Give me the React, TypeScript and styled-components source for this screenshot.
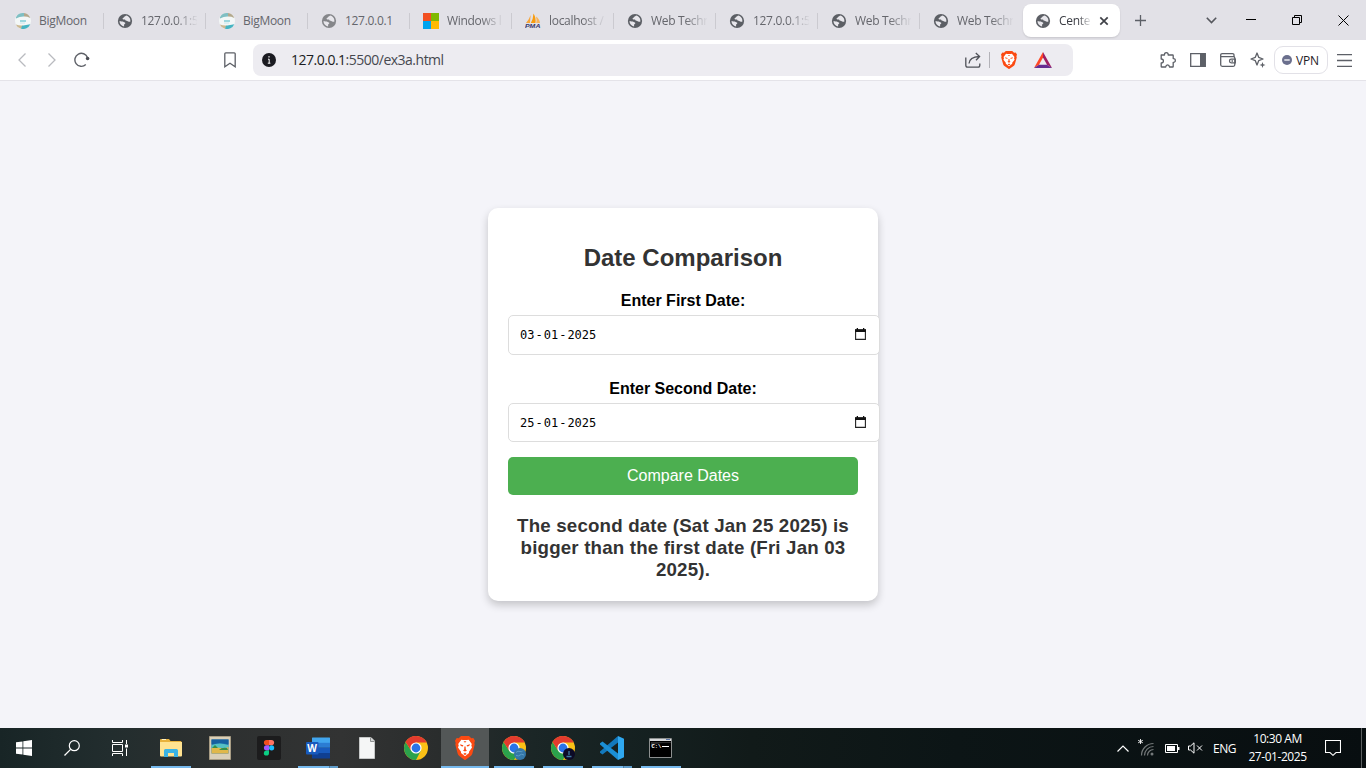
import React from "react";
import styled, { createGlobalStyle, css } from "styled-components";

const GlobalStyle = createGlobalStyle`
  *, *::before, *::after { box-sizing: border-box; }
  html, body { margin: 0; padding: 0; }
  body { font-family: "Open Sans", "Noto Sans", sans-serif; overflow: hidden; }
  svg { display: block; flex: none; }
`;

const Screen = styled.div`
  display: flex;
  flex-direction: column;
  width: 1366px;
  height: 768px;
  background: #f4f4f9;
`;

/* ---------- Tab strip ---------- */

const TabStrip = styled.header`
  display: flex;
  height: 40px;
  padding-left: 2px;
  background: #e2e1e7;
`;

const Tab = styled.div`
  display: flex;
  align-items: center;
  gap: 8px;
  width: 102px;
  height: 40px;
  padding: 2px 9px 0 13px;
  background: linear-gradient(#cbcad0, #cbcad0) right 13px / 1px 16px no-repeat;
  &:nth-child(10) { background: none; }
`;

const ActiveTab = styled.div`
  display: flex;
  align-items: center;
  width: 97px;
  height: 33px;
  margin: 4px 0 0 1px;
  padding: 1px 11px 0 12px;
  border-radius: 8px;
  background: #fff;
  box-shadow: 0 1px 2px rgba(0, 0, 0, 0.12);
  gap: 8px;
`;

const TabTitle = styled.span<{ $active?: boolean; $fade?: boolean }>`
  flex: 1;
  min-width: 0;
  overflow: hidden;
  white-space: nowrap;
  font-size: 12px;
  line-height: 18px;
  letter-spacing: -0.3px;
  color: ${(p) => (p.$active ? "#3b3d44" : "#65666c")};
  ${(p) =>
    p.$fade &&
    css`
      mask-image: linear-gradient(to right, #000 60%, transparent 102%);
    `}
`;

const WindowControls = styled.div`
  display: flex;
  margin-left: auto;
`;

const ControlSlot = styled.div<{ $w: number }>`
  display: flex;
  align-items: center;
  justify-content: center;
  width: ${(p) => p.$w}px;
  height: 40px;
`;

/* ---------- Toolbar ---------- */

const Toolbar = styled.nav`
  display: flex;
  align-items: center;
  height: 41px;
  padding: 0 0 0 7px;
  background: #fff;
  border-bottom: 1px solid #e4e3e9;
`;

const ToolSlot = styled.div<{ $ml?: number }>`
  display: flex;
  flex: none;
  align-items: center;
  justify-content: center;
  width: 30px;
  height: 30px;
  margin-left: ${(p) => p.$ml ?? 0}px;
`;

const AddressBar = styled.div`
  display: flex;
  flex: none;
  align-items: center;
  width: 820px;
  height: 32px;
  margin-left: 8px;
  padding: 0 21px 0 9px;
  border-radius: 8px;
  background: #edecf1;
`;

const Url = styled.span`
  flex: 1;
  margin-left: 15px;
  font-size: 14px;
  line-height: 20px;
  letter-spacing: -0.5px;
  color: #46484f;
  b { font-weight: 400; color: #1b1c22; }
`;

const Divider = styled.i`
  width: 1px;
  height: 16px;
  margin: 0 11px 0 8px;
  background: #b3b2b8;
`;

const VpnButton = styled.div`
  display: flex;
  flex: none;
  align-items: center;
  gap: 4px;
  width: 54px;
  height: 28px;
  margin-left: 1px;
  padding-left: 7px;
  border: 1px solid #e2e1e7;
  border-radius: 9px;
  font-size: 12px;
  letter-spacing: -0.2px;
  color: #1f2026;
`;

/* ---------- Page ---------- */

const Page = styled.main`
  display: flex;
  flex: 1;
  align-items: center;
  justify-content: center;
  background: #f4f4f9;
  font-family: Arial, "Liberation Sans", sans-serif;
`;

const Card = styled.section`
  width: 390px;
  height: 393px;
  padding: 36px 20px 20px;
  border-radius: 10px;
  background: #fff;
  box-shadow: 0 4px 8px rgba(0, 0, 0, 0.2);
  text-align: center;
`;

const Title = styled.h2`
  margin: 0 0 21px;
  font-size: 24px;
  line-height: 27px;
  color: #333;
`;

const Label = styled.label`
  display: block;
  height: 18px;
  font-size: 16px;
  line-height: 18px;
  font-weight: 700;
  color: #000;
`;

const DateBox = styled.div<{ $h: number; $mb: number }>`
  display: flex;
  align-items: center;
  justify-content: space-between;
  width: 372px;
  height: ${(p) => p.$h}px;
  margin: 5px 0 ${(p) => p.$mb}px;
  padding: 0 12px 0 11px;
  border: 1px solid #ddd;
  border-radius: 5px;
  background: #fff;
`;

const DateText = styled.div`
  display: flex;
  font: 12px/16px "DejaVu Sans Mono", monospace;
  color: #000;
  span { padding: 0 1px 0 0; }
  i + span { padding: 0 1px; }
  i { font-style: normal; }
`;

const CompareButton = styled.button`
  display: block;
  width: 350px;
  height: 38px;
  margin: 0 0 20px;
  padding: 10px;
  border: 0;
  border-radius: 5px;
  background: #4caf50;
  color: #fff;
  font: 16px/18px Arial, "Liberation Sans", sans-serif;
`;

const Result = styled.h3`
  margin: 0 -2px;
  font-size: 18.72px;
  line-height: 22px;
  letter-spacing: 0.18px;
  color: #333;
`;

/* ---------- Taskbar ---------- */

const Taskbar = styled.footer`
  display: flex;
  height: 40px;
  background: linear-gradient(90deg, #182526 0%, #222d2e 8%, #2d3030 16%, #323333 25%, #2a2d2d 32%, #1b2626 39%, #152121 46%, #111a19 55%, #0c1516 70%, #080e10 100%);
  color: #fff;
`;

const TaskSlot = styled.div<{ $open?: boolean; $active?: boolean; $stack?: boolean; $first?: boolean }>`
  display: flex;
  align-items: center;
  justify-content: center;
  width: 48px;
  height: 40px;
  margin-left: ${(p) => (p.$first ? 3 : 0)}px;
  margin-right: ${(p) => (p.$open === undefined ? 0 : 1)}px;
  ${(p) =>
    p.$open &&
    css`
      background: linear-gradient(90deg, #76b9ed ${p.$stack ? "31px, #4f7ea2 31px, #4f7ea2 32px, #5f9cca 32px" : "100%"}) 4px 38px / 40px 2px no-repeat;
    `}
  ${(p) =>
    p.$active &&
    css`
      background: linear-gradient(#76b9ed, #76b9ed) 0 38px / 48px 2px no-repeat, #535757;
    `}
`;

const Tray = styled.div`
  display: flex;
  align-items: center;
  margin-left: auto;
  font-size: 12px;
`;

const TrayIcons = styled.div`
  display: flex;
  align-items: center;
  gap: 8px;
`;

const Language = styled.span`
  width: 24px;
  margin-left: 10px;
  letter-spacing: -0.45px;
`;

const Clock = styled.div`
  display: flex;
  flex-direction: column;
  width: 70px;
  margin-left: 6px;
  padding-right: 1px;
  text-align: center;
  line-height: 18px;
  letter-spacing: -0.45px;
  white-space: nowrap;
`;

const NotificationIcon = styled.svg`
  margin-left: 12px;
`;

const Peek = styled.i`
  width: 1px;
  height: 40px;
  margin: 0 4px 0 20px;
  background: #5b5f60;
`;

/* ---------- Icons ---------- */

const Globe = ({ color = "#5c5f65" }: { color?: string }) => (
  <svg width="16" height="16" viewBox="0 0 16 16">
    <circle cx="8" cy="8" r="7.1" fill={color} />
    <path d="M9 2.6 C8.6 3.5 7.6 3.3 7.2 4.1 C6.8 4.8 5.8 4.7 5.6 5.5 C5.5 6.3 6.3 6.6 7.1 6.5 C8.4 6.4 8.5 7.1 8.8 7.7 C9.2 8.3 10.8 7.7 11.3 8.4 C11.7 9 12.4 8.8 13.3 8.7 C13.8 6 12 3 9 2.6Z" fill="#e8e7ec" />
    <path d="M2.5 8 C3.7 8.5 5.8 8.2 6.7 9 C7.4 9.6 8.5 9.3 8.3 10.3 C8.1 11.1 7.2 11 7.1 11.9 C7 12.8 7.3 13.1 7 13.4 C4.4 13 2.4 10.8 2.5 8Z" fill="#e8e7ec" />
  </svg>
);

const BigMoonIcon = () => (
  <svg width="16" height="16" viewBox="0 0 16 16">
    <circle cx="8" cy="8" r="8" fill="#f3f7f7" />
    <path d="M1 4.2A8 8 0 0 1 9 .1L9 3.6Q5 3.400 1 5.500Z" fill="#7fbfc3" />
    <path d="M9 .1A8 8 0 0 1 15.300 5Q12 3.400 9 3.600Z" fill="#b3a88c" />
    <path d="M.8 11.400A8 8 0 0 0 6 15.800L8 12.400Q5 13 .8 11.400Z" fill="#cbb891" />
    <path d="M6 15.800A8 8 0 0 0 15.300 11.200Q11 12 7 12.800Z" fill="#45b4c2" />
    <path d="M5 8h6" stroke="#6fc6d1" strokeWidth="1.300" />
    <path d="M5 10h5" stroke="#c9e8ec" />
  </svg>
);

const WindowsFavicon = () => (
  <svg width="16" height="16" viewBox="0 0 16 16" shapeRendering="crispEdges">
    <path fill="#f25022" d="M0 0h8v8H0z" />
    <path fill="#7fba00" d="M8 0h8v8H8z" />
    <path fill="#00a4ef" d="M0 8h8v8H0z" />
    <path fill="#ffb900" d="M8 8h8v8H8z" />
  </svg>
);

const PmaIcon = () => (
  <svg width="16" height="16" viewBox="0 0 16 16">
    <path d="M5.600 2L5 10H1Q4.300 6.500 5.600 2Z" fill="#f6a53a" />
    <path d="M8.500 .5Q11.300 5 10.400 10H5.800Q8.200 6 8.500 .5Z" fill="#f89c0e" />
    <path d="M11 3.500Q14.600 6 15 10H11.300Q12 7 11 3.500Z" fill="#f8b35a" />
    <text x="0" y="15.400" fontSize="6.200" fontWeight="800" fontStyle="italic" fontFamily="Liberation Sans, sans-serif" textLength="15.400" lengthAdjust="spacingAndGlyphs" fill="#37376b">PMA</text>
  </svg>
);

const Lion = ({ w, h }: { w: number; h: number }) => (
  <svg width={w} height={h} viewBox="0 0 20 24" preserveAspectRatio="none">
    <path d="M6 0H14L16.300 2.300 18.300 2 20 4.800 19.300 7 19.700 8.500 17.300 17.800Q16.900 19.200 15.700 20L10.700 23.700Q10 24.200 9.300 23.700L4.300 20Q3.100 19.200 2.700 17.800L.3 8.500.7 7 0 4.800 1.700 2 3.700 2.300Z" fill="#fb4a12" />
    <path d="M6.300 3.700L8 4.100H12L13.700 3.700 16.800 8 16.300 9.500 17 11.500 14 15.800 14 17 10 20.300 6 17 6 15.800 3 11.500 3.700 9.500 3.200 8Z" fill="#fff" />
    <path d="M5 8.300L8.300 9.300 8 10.400 5.800 10ZM15 8.300L11.700 9.300 12 10.400 14.200 10ZM8 14.400L10 15.600 12 14.400 10.800 13.500 10.600 10.500H9.400L9.200 13.500ZM8.200 18L10 16.800 11.800 18 10 19ZM8.500 5.200H11.500L10 6.800Z" fill="#fb4a12" />
  </svg>
);

const BatIcon = () => (
  <svg width="18" height="16" viewBox="0 0 18 16">
    <path d="M9 0L0 16L5 12.7L9 5.6Z" fill="#ff4724" />
    <path d="M9 0L18 16L13 12.7L9 5.6Z" fill="#9e1f63" />
    <path d="M0 16H18L13 12.7H5Z" fill="#662d91" />
  </svg>
);

const ChromeIcon = ({ badge }: { badge?: string }) => (
  <svg width="24" height="24" viewBox="0 0 24 24">
    <circle cx="12" cy="12" r="12" fill="#fbc116" />
    <path d="M1.608 6L7.240 14.750 12 17.500 16.760 14.750 12 24A12 12 0 0 1 1.608 6Z" fill="#2ba24c" />
    <path d="M1.608 6A12 12 0 0 1 22.650 6.500H12L7.240 14.750Z" fill="#e33b2e" />
    <circle cx="12" cy="12" r="5.6" fill="#fff" />
    <circle cx="12" cy="12" r="4.400" fill="#2a73e8" />
    {badge && <circle cx="18" cy="18" r="6" fill={badge} />}
    {badge === "#3477a8" && <path d="M14 16.500q2-2 4-1t3-1M14 19.500q3 1 4-.5t4 0" stroke="#5a9cc8" fill="none" />}
    {badge === "#0c0a26" && <path d="M18 15v4M15.500 20.500h5" stroke="#3e7aa0" strokeWidth="1.300" />}
  </svg>
);

const stroke = { fill: "none", stroke: "#5d6067", strokeWidth: 1.3 } as const;

const tabs: { icon: React.ReactNode; title: string; fade?: boolean }[] = [
  { icon: <BigMoonIcon />, title: "BigMoon" },
  { icon: <Globe />, title: "127.0.0.1:5", fade: true },
  { icon: <BigMoonIcon />, title: "BigMoon" },
  { icon: <Globe color="#85868a" />, title: "127.0.0.1" },
  { icon: <WindowsFavicon />, title: "Windows l", fade: true },
  { icon: <PmaIcon />, title: "localhost /", fade: true },
  { icon: <Globe />, title: "Web Techn", fade: true },
  { icon: <Globe />, title: "127.0.0.1:5", fade: true },
  { icon: <Globe />, title: "Web Techn", fade: true },
  { icon: <Globe />, title: "Web Techn", fade: true },
];

function BrowserTabs() {
  return (
    <TabStrip>
      {tabs.map((t, i) => (
        <Tab key={i}>
          {t.icon}
          <TabTitle $fade={t.fade}>{t.title}</TabTitle>
        </Tab>
      ))}
      <ActiveTab>
        <Globe />
        <TabTitle $active $fade>Cente</TabTitle>
        <svg width="10" height="10" viewBox="0 0 10 10"><path d="M1.300 1.300l7.400 7.400M8.700 1.300L1.300 8.700" stroke="#3f4147" strokeWidth="1.700" /></svg>
      </ActiveTab>
      <ControlSlot $w={41}>
        <svg width="11" height="11" viewBox="0 0 11 11"><path d="M5.500 0v11M0 5.500h11" stroke="#5d6067" strokeWidth="1.300" /></svg>
      </ControlSlot>
      <WindowControls>
        <ControlSlot $w={34}>
          <svg width="11" height="7" viewBox="0 0 11 7"><path d="M.8.8L5.500 5.500 10.200.8" stroke="#55575d" strokeWidth="1.600" fill="none" /></svg>
        </ControlSlot>
        <ControlSlot $w={46}>
          <svg width="10" height="2" viewBox="0 0 10 2"><path d="M0 0h10v1H0z" fill="#000" /></svg>
        </ControlSlot>
        <ControlSlot $w={46}>
          <svg width="10" height="10" viewBox="0 0 10 10"><path d="M.5 2.500h7v7h-7zM2.500 2.500v-2h7v7h-2" stroke="#000" fill="none" /></svg>
        </ControlSlot>
        <ControlSlot $w={46}>
          <svg width="11" height="11" viewBox="0 0 11 11"><path d="M.5.5l10 10M10.500.5l-10 10" stroke="#000" /></svg>
        </ControlSlot>
      </WindowControls>
    </TabStrip>
  );
}

function BrowserToolbar() {
  return (
    <Toolbar>
      <ToolSlot>
        <svg width="10" height="16" viewBox="0 0 10 16"><path d="M8.500 1.500L2 8l6.500 6.500" stroke="#b9babf" strokeWidth="1.300" fill="none" /></svg>
      </ToolSlot>
      <ToolSlot>
        <svg width="10" height="16" viewBox="0 0 10 16"><path d="M1.500 1.500L8 8l-6.500 6.500" stroke="#b9babf" strokeWidth="1.300" fill="none" /></svg>
      </ToolSlot>
      <ToolSlot>
        <svg width="16" height="16" viewBox="0 0 16 16">
          <path d="M11.800 12.600A6.500 6.500 0 1 1 13.500 5.600" fill="none" stroke="#5d6067" strokeWidth="1.400" />
          <circle cx="13.600" cy="6.500" r="1.800" fill="#4b4d54" />
        </svg>
      </ToolSlot>
      <ToolSlot $ml={118}>
        <svg width="12" height="16" viewBox="0 0 12 16"><path d="M.8 1.800Q.8.800 1.800.800H10.200Q11.200.800 11.200 1.800V14.800L6 11.300.8 14.800Z" {...stroke} /></svg>
      </ToolSlot>
      <AddressBar>
        <svg width="14" height="14" viewBox="0 0 14 14">
          <circle cx="7" cy="7" r="7" fill="#1b1b21" />
          <path d="M7 3v1.600M6 6.200h1.200v4M5.800 10.200h2.600" stroke="#fff" strokeWidth="1" fill="none" />
        </svg>
        <Url><b>127.0.0.1</b>:5500/ex3a.html</Url>
        <svg width="16" height="16" viewBox="0 0 16 16">
          <path d="M.8 5.500V13.300Q.8 15.200 2.700 15.200H13Q14.800 15.200 14.800 13.300V11.500" {...stroke} stroke="#4f5158" />
          <path d="M4 11.500Q4.500 5 14.300 4.500M10.800 1L14.600 4.500 11 8.200" {...stroke} stroke="#4f5158" />
        </svg>
        <Divider />
        <Lion w={16} h={18} />
        <svg width="17" height="1" />
        <BatIcon />
      </AddressBar>
      <ToolSlot $ml={80}>
        <svg width="16" height="16" viewBox="0 0 16 16">
          <path d="M1.200 3H4.500Q4.300.7 6.300.7T8.200 3H12.600Q13.200 3 13.200 3.600V6.600Q15.300 6.400 15.300 8.400T13.200 10.300V14.400Q13.200 15 12.600 15H9.500Q9.300 12.900 7.600 12.900T5.700 15H1.800Q1.200 15 1.200 14.400V11Q3.400 11 3.400 9T1.200 7Z" {...stroke} strokeLinejoin="round" />
        </svg>
      </ToolSlot>
      <ToolSlot>
        <svg width="16" height="14" viewBox="0 0 16 14"><path d="M.7.7h14.600v12.600H.7z" {...stroke} /><path d="M10 1h5.300v12H10z" fill="#5d6067" /></svg>
      </ToolSlot>
      <ToolSlot>
        <svg width="16" height="14" viewBox="0 0 16 14">
          <path d="M14 3.500V2.200Q14 .7 12.500.7H2.200Q.7.7.7 2.200V11.800Q.7 13.300 2.200 13.300H13.200Q14.800 13.300 14.800 11.800V5Q14.800 3.600 13.300 3.600H1" {...stroke} />
          <path d="M15.300 6.200H11.200Q9.500 6.200 9.500 8T11.200 9.900H15.300Z" {...stroke} /><path d="M11.500 8h1.500" {...stroke} />
        </svg>
      </ToolSlot>
      <ToolSlot>
        <svg width="16" height="16" viewBox="0 0 16 16">
          <path d="M7 1L8.700 5.300 13 7 8.700 8.700 7 13 5.300 8.700 1 7 5.300 5.300Z" {...stroke} strokeLinejoin="round" />
          <path d="M12.500 10L13.300 12.200 15.500 13 13.300 13.800 12.500 16 11.700 13.800 9.500 13 11.700 12.200Z" fill="#5d6067" />
        </svg>
      </ToolSlot>
      <VpnButton>
        <svg width="10" height="10" viewBox="0 0 10 10"><circle cx="5" cy="5" r="5" fill="#6a6f8d" /><path d="M2.300 5h5.400" stroke="#fff" strokeWidth="1.300" /></svg>
        VPN
      </VpnButton>
      <ToolSlot $ml={1}>
        <svg width="15" height="13" viewBox="0 0 15 13"><path d="M0 .6h15M0 6.500h15M0 12.400h15" {...stroke} /></svg>
      </ToolSlot>
    </Toolbar>
  );
}

function DateField({ value, h, mb }: { value: [string, string, string]; h: number; mb: number }) {
  return (
    <DateBox $h={h} $mb={mb}>
      <DateText>
        <span>{value[0]}</span><i>-</i><span>{value[1]}</span><i>-</i><span>{value[2]}</span>
      </DateText>
      <svg width="13" height="14" viewBox="0 0 13 14">
        <path d="M1.600 2h9.800v9.400H1.600z" fill="none" stroke="#222" strokeWidth="1.100" />
        <path d="M1 1.300h11v2.700H1zM2.700 0h1.300v2H2.700zM9 0h1.300v2H9z" fill="#111" />
      </svg>
    </DateBox>
  );
}

function DesktopTaskbar() {
  return (
    <Taskbar>
      <TaskSlot>
        <svg width="16" height="16" viewBox="0 0 16 16"><path d="M0 2.300L6.500 1.400V7.600H0zM7.300 1.300L16 0V7.600H7.300zM0 8.400H6.500V14.600L0 13.700zM7.300 8.400H16V16L7.300 14.700z" fill="#fff" /></svg>
      </TaskSlot>
      <TaskSlot>
        <svg width="16" height="16" viewBox="0 0 16 16"><circle cx="10.300" cy="5.700" r="5" fill="none" stroke="#fff" strokeWidth="1.200" /><path d="M6.600 9.400L.5 15.500" stroke="#fff" strokeWidth="1.300" /></svg>
      </TaskSlot>
      <TaskSlot>
        <svg width="16" height="16" viewBox="0 0 16 16">
          <path d="M.5 0v2.500h10V0M.5 16v-2.500h10V16M.5 4.500h10v7H.5zM14.500 0v4M14.500 8.500V16" fill="none" stroke="#fff" />
          <path d="M13 4.500h3v3h-3z" fill="#fff" />
        </svg>
      </TaskSlot>
      <TaskSlot $first $open>
        <svg width="22" height="20" viewBox="0 0 22 20">
          <path d="M0 3V2Q0 1 1 1H9L10.500 3H20.500Q21.500 3 21.500 4V7H0Z" fill="#e8b23c" />
          <path d="M2 1.500h4" stroke="#fff2c3" />
          <path d="M0 4H22V17.500Q22 18.500 21 18.500H1Q0 18.500 0 17.500Z" fill="#ffe391" />
          <path d="M4 19V12.500Q4 11 5.500 11H16.500Q18 11 18 12.500V19H14V15H8V19Z" fill="#3bb3e4" />
        </svg>
      </TaskSlot>
      <TaskSlot $open={false}>
        <svg width="22" height="24" viewBox="0 0 22 24">
          <path d="M.5.5h21v23H.5z" fill="#d9cfb8" stroke="#a79c84" />
          <path d="M2.500 3.500h17v14h-17z" fill="#1e73ae" />
          <path d="M2.500 3.500h17v5q-8-3-17 0z" fill="#1760a0" />
          <path d="M2.500 9q8-3 17 0v3h-17z" fill="#54c0c4" />
          <path d="M2.500 12q6-1 9 0t8-1v6.500h-17z" fill="#e0b84b" />
          <path d="M3 12l3-3 3 3zM10 14q3-3 8-2l1 2z" fill="#348e4a" />
        </svg>
      </TaskSlot>
      <TaskSlot $open={false}>
        <svg width="24" height="24" viewBox="0 0 24 24">
          <rect width="24" height="24" rx="2" fill="#1c1c1d" />
          <path d="M12 4H9.500a2.600 2.600 0 0 0 0 5.200H12z" fill="#f24e1e" /><path d="M12 4h2.500a2.600 2.600 0 0 1 0 5.200H12z" fill="#ff7262" />
          <path d="M12 9.200H9.500a2.600 2.600 0 0 0 0 5.200H12z" fill="#a259ff" /><circle cx="14.600" cy="11.800" r="2.600" fill="#1abcfe" />
          <path d="M12 14.400H9.500a2.600 2.600 0 1 0 2.500 2.600z" fill="#0acf83" />
        </svg>
      </TaskSlot>
      <TaskSlot $open $stack>
        <svg width="24" height="22" viewBox="0 0 24 22">
          <path d="M6 1Q6 .5 6.500.5H23.500Q24 .5 24 1V6H6z" fill="#41a5ee" /><path d="M6 5.800h18v5H6z" fill="#2b7cd3" /><path d="M6 10.800h18v5.200H6z" fill="#185abd" /><path d="M6 16h18v5q0 .5-.5.5h-17q-.5 0-.5-.5z" fill="#103f91" />
          <rect y="5" width="12.500" height="12.500" rx="1" fill="#185abd" />
          <text x="6.200" y="15" fontSize="10" fontWeight="700" fontFamily="Open Sans, sans-serif" textAnchor="middle" fill="#fff">W</text>
        </svg>
      </TaskSlot>
      <TaskSlot $open={false}>
        <svg width="16" height="22" viewBox="0 0 16 22"><path d="M.5.5H12L15.500 4V21.500H.5z" fill="#f5f6f6" stroke="#c6c8c8" /><path d="M11.500.5V4.500H15.500" fill="#d5d7d7" stroke="#8f9292" /></svg>
      </TaskSlot>
      <TaskSlot $open={false}><ChromeIcon /></TaskSlot>
      <TaskSlot $open $active><Lion w={20} h={24} /></TaskSlot>
      <TaskSlot $open><ChromeIcon badge="#3477a8" /></TaskSlot>
      <TaskSlot $open><ChromeIcon badge="#0c0a26" /></TaskSlot>
      <TaskSlot $open $stack>
        <svg width="24" height="24" viewBox="0 0 24 24">
          <path d="M18 0L24 2.700V21.300L18 24z" fill="#2fa8f0" />
          <path d="M18 0V6.500L2.500 18.500 0 16.700V15.500z" fill="#1379bd" />
          <path d="M18 24V17.500L2.500 5.500 0 7.300V8.500z" fill="#1b8fd6" />
        </svg>
      </TaskSlot>
      <TaskSlot $open>
        <svg width="24" height="20" viewBox="0 0 24 20">
          <path d="M.5.5h22v19H.5z" fill="#000" stroke="#8d9090" /><path d="M1 1h21v2H1z" fill="#d8dadc" /><path d="M17 1.500h4" stroke="#5d77a8" />
          <path d="M2 9q6-4 12-4h8V4H2z" fill="#2e2e2e" />
          <text x="2.500" y="9.500" fontSize="5.500" fontWeight="700" fontFamily="Liberation Mono, monospace" fill="#fff">C:\</text><path d="M13 8.500h7" stroke="#fff" />
        </svg>
      </TaskSlot>
      <Tray>
        <TrayIcons>
          <svg width="12" height="7" viewBox="0 0 12 7"><path d="M.5 6.500L6 1l5.500 5.500" stroke="#fff" strokeWidth="1.200" fill="none" /></svg>
          <svg width="20" height="18" viewBox="0 0 20 18">
            <path d="M4.500 17A12 12 0 0 1 16.500 5M7.500 17A9 9 0 0 1 16.500 8M10.500 17A6 6 0 0 1 16.500 11" transform="translate(0 -.5)" stroke="#74797a" strokeWidth="1.200" fill="none" />
            <circle cx="15" cy="15" r="1.500" fill="#74797a" />
            <path d="M3.500 0v5M1.200 1.300l4.600 2.500M5.800 1.300L1.200 3.800" stroke="#fff" strokeWidth=".9" />
          </svg>
          <svg width="15" height="9" viewBox="0 0 15 9"><path d="M.5.5h12v8H.5z" fill="none" stroke="#fff" /><path d="M2 2h8v5H2zM13 3h1.500v3H13z" fill="#fff" /></svg>
          <svg width="15" height="12" viewBox="0 0 15 12"><path d="M.5 4H2.500L6 .8V11.200L2.500 8H.5zM9 3.500l5 5M14 3.500l-5 5" fill="none" stroke="#fff" /></svg>
        </TrayIcons>
        <Language>ENG</Language>
        <Clock>
          <span>10:30 AM</span>
          <span>27-01-2025</span>
        </Clock>
        <NotificationIcon width="16" height="16" viewBox="0 0 16 16"><path d="M.5.5h15v12H11L8 15.300 5 12.500H.5z" fill="none" stroke="#fff" strokeWidth="1.100" /></NotificationIcon>
        <Peek />
      </Tray>
    </Taskbar>
  );
}

export default function App() {
  return (
    <>
      <GlobalStyle />
      <Screen>
        <BrowserTabs />
        <BrowserToolbar />
        <Page>
          <Card>
            <Title>Date Comparison</Title>
            <Label>Enter First Date:</Label>
            <DateField value={["03", "01", "2025"]} h={40} mb={25} />
            <Label>Enter Second Date:</Label>
            <DateField value={["25", "01", "2025"]} h={39} mb={15} />
            <CompareButton>Compare Dates</CompareButton>
            <Result>The second date (Sat Jan 25 2025) is bigger than the first date (Fri Jan 03 2025).</Result>
          </Card>
        </Page>
        <DesktopTaskbar />
      </Screen>
    </>
  );
}
